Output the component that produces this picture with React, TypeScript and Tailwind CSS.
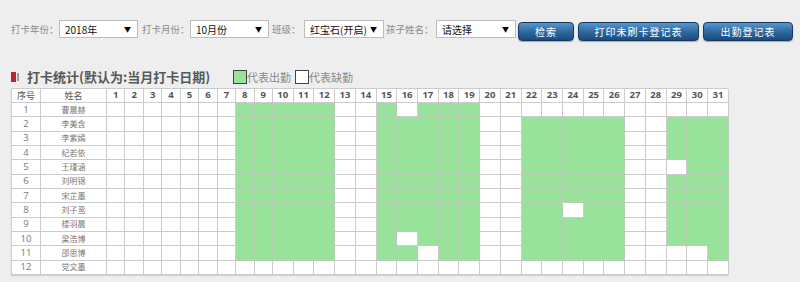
import React from 'react';

const cjk = { fontFamily: '"Noto Sans CJK SC", "Noto Sans", sans-serif' };

const names = ['曹晨赫', '李美含', '李紫嫣', '纪若依', '王瑾涵', '刘明锦', '宋芷墨', '刘子鸾', '楼羽晨', '梁浩博', '邵思博', '党文墨'];

const base = [8, 9, 10, 11, 12, 15, 16, 17, 18, 19, 22, 23, 24, 25, 26, 29, 30, 31];
const missing: Record<number, number[]> = { 5: [29], 8: [24], 10: [16], 11: [17, 29, 30] };

const present = (row: number, day: number) => {
  if (row === 12) return false;
  if (row === 1) return [8, 9, 10, 11, 12, 15, 17, 18, 19].includes(day);
  return base.includes(day) && !(missing[row] || []).includes(day);
};

const days = Array.from({ length: 31 }, (_, i) => i + 1);

const Select = ({ value, w }: { value: string; w: string }) => (
  <div className={`${w} h-[18px] bg-white border border-[#bdbdbd] flex items-center justify-between pl-[5px] pr-[6px] text-[10px] text-[#111]`}>
    <span>{value}</span>
    <span className="text-[7px] text-black">▼</span>
  </div>
);

const Button = ({ label, w, ml }: { label: string; w: string; ml: string }) => (
  <div className={`${w} ${ml} mt-[2px] h-[19px] rounded-[4px] border border-[#16395d] bg-gradient-to-b from-[#5896cb] via-[#2f6aa2] to-[#1a4c7d] flex items-center justify-center text-[10px] tracking-[1px] text-white shadow-[0_1px_1px_rgba(0,0,0,0.3)]`}>
    {label}
  </div>
);

const App = () => {
  return (
    <div className="w-[800px] h-[282px] bg-[#eeeeee] pl-[11px] pt-[20px]" style={cjk}>
      {/* Filters */}
      <div className="flex items-start">
        <span className="w-[48px] h-[18px] flex items-center text-[9.5px] text-[#8a8a8a]">打卡年份：</span>
        <Select value="2018年" w="w-[79px]" />
        <span className="w-[52px] h-[18px] flex items-center pl-[4px] text-[9.5px] text-[#8a8a8a]">打卡月份：</span>
        <Select value="10月份" w="w-[79px]" />
        <span className="w-[35px] h-[18px] flex items-center pl-[3px] text-[9.5px] text-[#8a8a8a]">班级：</span>
        <Select value="红宝石(开启)" w="w-[80px]" />
        <span className="w-[52px] h-[18px] flex items-center pl-[2px] text-[9.5px] text-[#8a8a8a]">孩子姓名：</span>
        <Select value="请选择" w="w-[80px]" />
        <Button label="检索" w="w-[56px]" ml="ml-[2px]" />
        <Button label="打印未刷卡登记表" w="w-[121px]" ml="ml-[4px]" />
        <Button label="出勤登记表" w="w-[90px]" ml="ml-[4px]" />
      </div>

      {/* Title + legend */}
      <div className="flex items-center h-[18px] mt-[27px] mb-[2px]">
        <span className="w-[5px] h-[10px] bg-[#b8262b]"></span>
        <span className="w-[2px] h-[8px] bg-[#9a9a9a] ml-[1px] mr-[8px]"></span>
        <span className="text-[13px] font-bold text-[#585858] w-[206px]">打卡统计(默认为:当月打卡日期)</span>
        <span className="w-[14px] h-[14px] bg-[#99e29b] border border-[#444]"></span>
        <span className="text-[11px] text-[#8a8a8a] w-[48px]">代表出勤</span>
        <span className="w-[14px] h-[14px] bg-white border border-[#444]"></span>
        <span className="text-[11px] text-[#8a8a8a]">代表缺勤</span>
      </div>

      {/* Attendance table */}
      <div className="grid w-[717px] grid-cols-[29px_66px_repeat(9,18.44px)_repeat(22,20.73px)] grid-rows-[14px_repeat(12,14.33px)] border-l border-t border-[#cccccc] bg-white shadow-[0_1px_1px_rgba(0,0,0,0.12)]">
        <div className="border-r border-b border-[#cccccc] flex items-center justify-center text-[9px] text-[#555]">序号</div>
        <div className="border-r border-b border-[#cccccc] flex items-center justify-center text-[9px] text-[#555]">姓名</div>
        {days.map((d) => (
          <div key={d} className="border-r border-b border-[#cccccc] flex items-center justify-center text-[9.5px] font-bold text-[#555]" style={{ fontFamily: '"Open Sans", "Noto Sans", sans-serif' }}>
            {d}
          </div>
        ))}
        {names.map((name, i) => (
          <React.Fragment key={i}>
            <div className="border-r border-b border-[#cccccc] flex items-center justify-center text-[9.5px] text-[#777]" style={{ fontFamily: '"Open Sans", "Noto Sans", sans-serif' }}>
              {i + 1}
            </div>
            <div className="border-r border-b border-[#cccccc] flex items-center justify-center text-[8px] text-[#777]">{name}</div>
            {days.map((d) => (
              <div
                key={d}
                className={present(i + 1, d) ? 'border-r border-b border-[#b5cfb5] bg-[#99e29b]' : 'border-r border-b border-[#cccccc] bg-white'}
              ></div>
            ))}
          </React.Fragment>
        ))}
      </div>
    </div>
  );
};

export default App;
